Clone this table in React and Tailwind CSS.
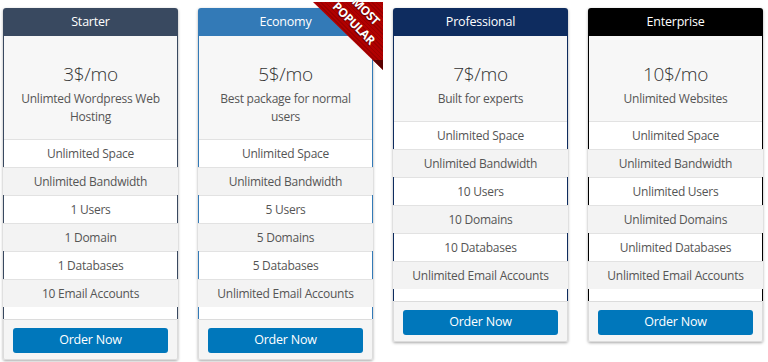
const plans = [
  {
    name: "Starter",
    price: "3$/mo",
    desc: "Unlimted Wordpress Web Hosting",
    head: "bg-[#394960]",
    edge: "border-[#394960]",
    items: ["Unlimited Space", "Unlimited Bandwidth", "1 Users", "1 Domain", "1 Databases", "10 Email Accounts"],
  },
  {
    name: "Economy",
    price: "5$/mo",
    desc: "Best package for normal users",
    head: "bg-[#337ab7]",
    edge: "border-[#337ab7]",
    popular: true,
    items: ["Unlimited Space", "Unlimited Bandwidth", "5 Users", "5 Domains", "5 Databases", "Unlimited Email Accounts"],
  },
  {
    name: "Professional",
    price: "7$/mo",
    desc: "Built for experts",
    head: "bg-[#0e2c5f]",
    edge: "border-[#0e2c5f]",
    items: ["Unlimited Space", "Unlimited Bandwidth", "10 Users", "10 Domains", "10 Databases", "Unlimited Email Accounts"],
  },
  {
    name: "Enterprise",
    price: "10$/mo",
    desc: "Unlimited Websites",
    head: "bg-black",
    edge: "border-black",
    items: ["Unlimited Space", "Unlimited Bandwidth", "Unlimited Users", "Unlimited Domains", "Unlimited Databases", "Unlimited Email Accounts"],
  },
];

const Ribbon = () => (
  <div className="absolute left-[115px] top-[-6px] w-[70px] h-[68px] pointer-events-none">
    <div className="absolute inset-0 [clip-path:polygon(0_0,100%_0,100%_100%)] bg-[repeating-linear-gradient(45deg,#b10000_0px,#b10000_2px,#9a0000_2px,#9a0000_3px)]" />
    <div className="absolute right-0 bottom-0 w-[10px] h-[10px] [clip-path:polygon(100%_0,100%_100%,0_0)] bg-[#5a0000]" />
    <div className="absolute left-[47px] top-[15px] -translate-x-1/2 -translate-y-1/2 rotate-45 text-white font-bold text-[12px] leading-[17px] text-center uppercase tracking-[-0.4px] [text-shadow:0_1px_1px_rgba(0,0,0,0.5)]">
      <div>Most</div>
      <div>Popular</div>
    </div>
  </div>
);

const Card = ({ plan }) => (
  <div className="relative w-[175px] rounded-t-[3px] rounded-b-[2px] shadow-[0_1px_3px_rgba(0,0,0,0.35)]">
    <div className={`${plan.head} h-7 rounded-t-[3px] flex items-center justify-center text-white text-[12.5px] tracking-[-0.2px]`}>
      {plan.name}
    </div>
    <div className={`bg-[#f7f7f7] border-x ${plan.edge} pt-6 pb-[13px] px-3 text-center`}>
      <div className="text-[19px] leading-7 text-[#333] font-light tracking-[-0.3px]">{plan.price}</div>
      <div className="mt-[2px] text-[12px] leading-[18px] text-[#555] tracking-[-0.25px]">{plan.desc}</div>
    </div>
    <ul className={`bg-white border-x ${plan.edge} pb-[12px]`}>
      {plan.items.map((item, i) => (
        <li
          key={item}
          className={`h-7 flex items-center justify-center border-t border-t-[#e2e2e2] text-[12px] tracking-[-0.25px] text-[#555] ${
            i % 2 ? "bg-[#f3f3f3] -mx-px" : ""
          }`}
        >
          {item}
        </li>
      ))}
    </ul>
    <div className="bg-[#f5f5f5] border border-[#dcdcdc] rounded-b-[2px] px-[9px] py-[6px]">
      <button className="w-full h-[25px] rounded-[3px] bg-[#0077bb] text-white text-[12.5px] tracking-[-0.2px]">Order Now</button>
    </div>
    {plan.popular && <Ribbon />}
  </div>
);

export default function App() {
  return (
    <div className="w-[768px] h-[362px] bg-white pl-[3px] pt-2 flex items-start gap-5 font-['Open_Sans',sans-serif]">
      {plans.map((p) => (
        <Card key={p.name} plan={p} />
      ))}
    </div>
  );
}
